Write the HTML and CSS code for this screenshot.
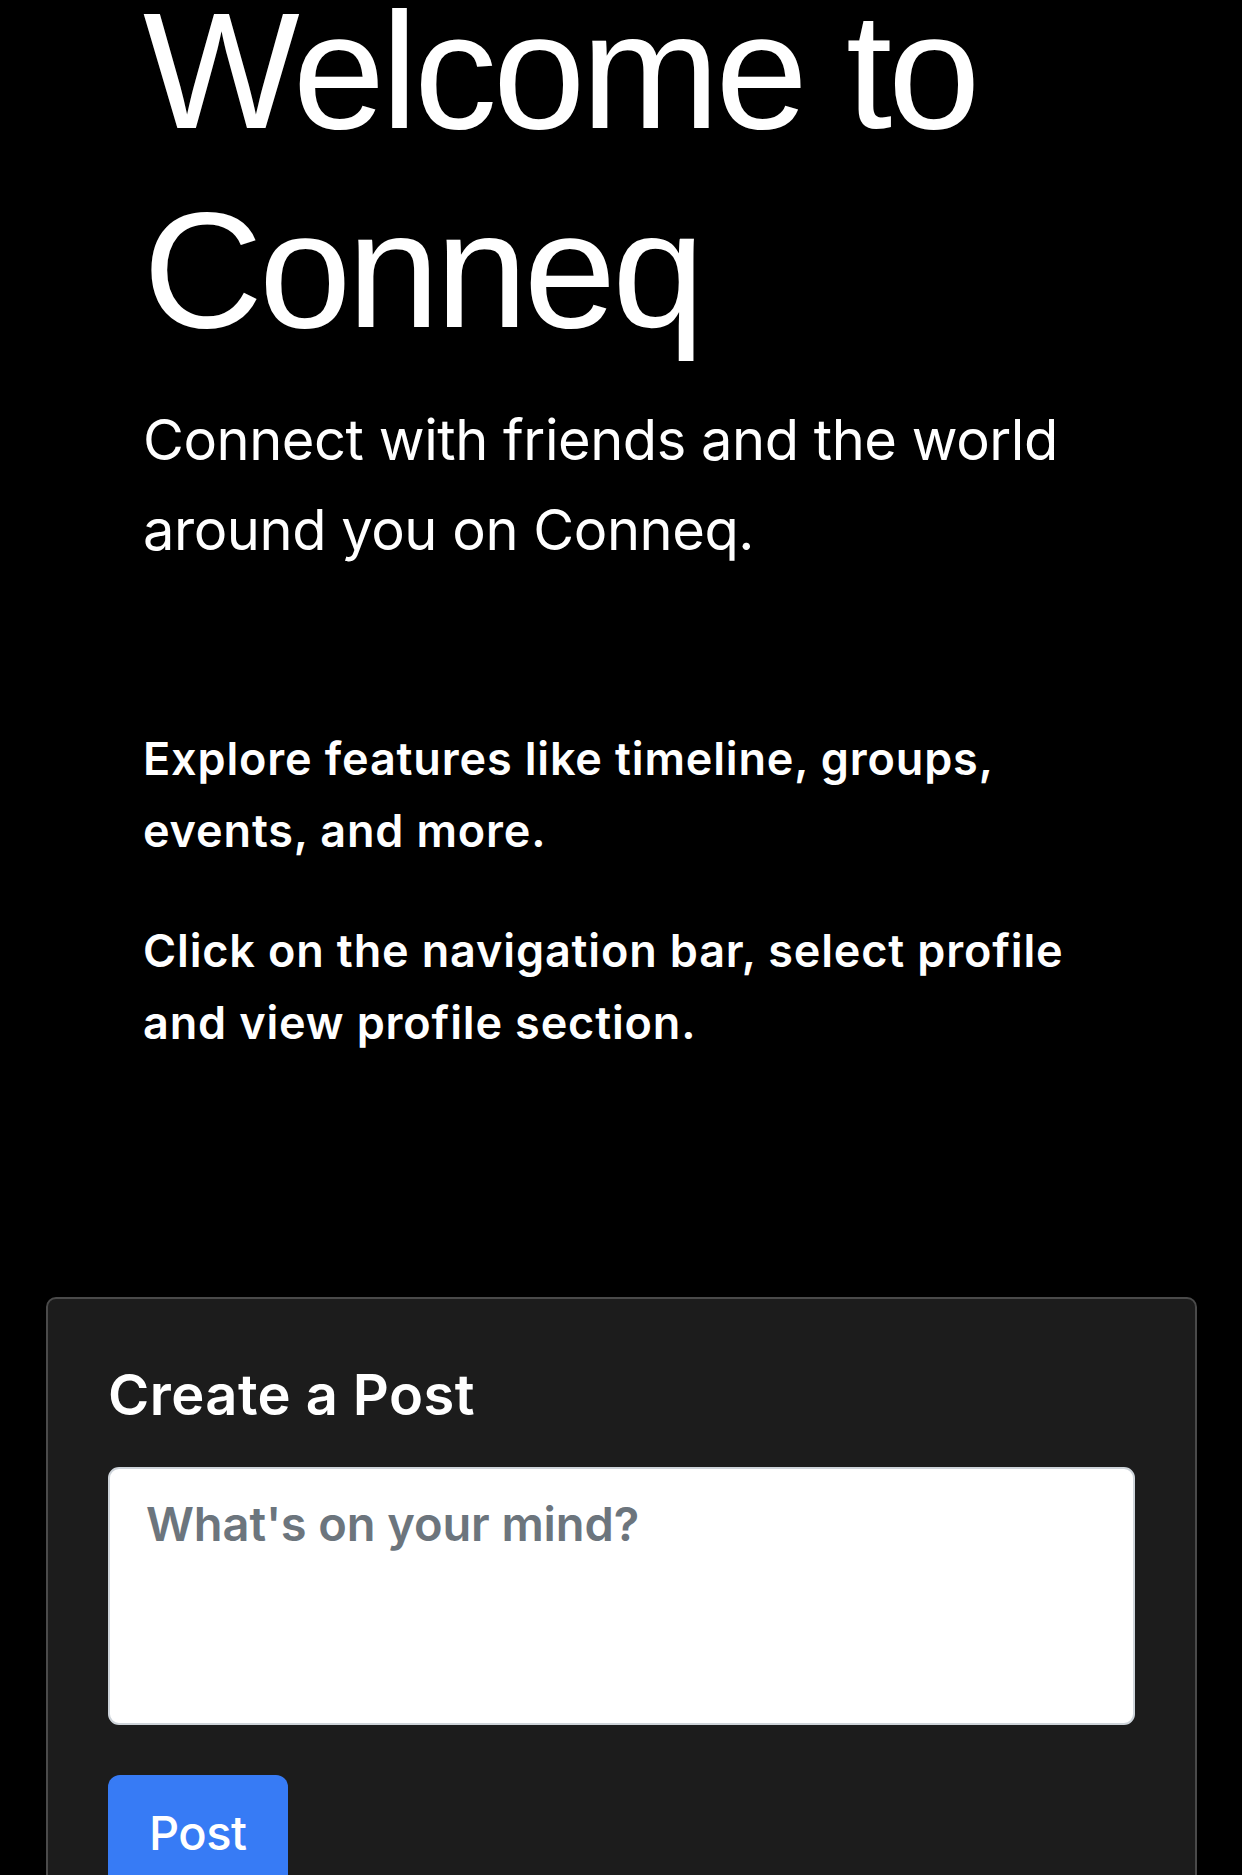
FILE: index.html
```html
<!DOCTYPE html>
<html lang="en">
<head>
<meta charset="utf-8">
<title>Conneq</title>
<link rel="stylesheet" href="styles.css">
</head>
<body>
  <main class="page">
    <section class="hero">
      <h1 class="hero-title">Welcome to Conneq</h1>
      <p class="hero-lead">Connect with friends and the world around you on Conneq.</p>
      <div class="hero-info">
        <p class="info-text">Explore features like timeline, groups, events, and more.</p>
        <p class="info-text">Click on the navigation bar, select profile and view profile section.</p>
      </div>
    </section>
    <section class="post-card">
      <h2 class="post-title">Create a Post</h2>
      <textarea class="post-input" placeholder="What's on your mind?"></textarea>
      <button class="post-button" type="button">Post</button>
    </section>
  </main>
</body>
</html>
```

FILE: styles.css
```css
html, body {
  margin: 0;
  padding: 0;
  background: #000;
  color: #fff;
  height: 1875px;
  overflow: hidden;
}

body {
  font-family: Inter, "Noto Sans", sans-serif;
}

.page {
  display: flex;
  flex-direction: column;
}

.hero {
  padding: 0 143px;
}

.hero-title {
  font-family: "Liberation Sans", Arial, sans-serif;
  font-weight: 400;
  font-size: 166px;
  line-height: 1.2;
  letter-spacing: -4px;
  margin: -29px 0 0 0;
}

.hero-lead {
  font-size: 56px;
  font-weight: 400;
  line-height: 90px;
  letter-spacing: -0.45px;
  margin: 26px 0 0 0;
}

.hero-info {
  display: flex;
  flex-direction: column;
  gap: 48px;
  margin-top: 148px;
}

.info-text {
  font-size: 45px;
  font-weight: 600;
  line-height: 72px;
  letter-spacing: 0.85px;
  margin: 0;
}

.post-card {
  margin: 238px 45px 0 46px;
  background: #1c1c1c;
  border: 2px solid #4a4a4a;
  border-radius: 10px;
  padding: 63px 60px 60px 60px;
  display: flex;
  flex-direction: column;
  align-items: flex-start;
}

.post-title {
  font-size: 56px;
  font-weight: 600;
  line-height: 67px;
  letter-spacing: 0.45px;
  margin: 0 0 38px 0;
}

.post-input {
  box-sizing: border-box;
  width: 100%;
  height: 258px;
  background: #fff;
  border: 2px solid #ced4da;
  border-radius: 11px;
  padding: 20px 36px;
  font-family: Inter, "Noto Sans", sans-serif;
  font-size: 47px;
  font-weight: 600;
  line-height: 70px;
  letter-spacing: -0.1px;
  color: #212529;
  resize: none;
  margin: 0;
}

.post-input::placeholder {
  color: #6c757d;
  opacity: 1;
}

.post-button {
  margin-top: 50px;
  background: #377bf5;
  color: #fff;
  border: none;
  border-radius: 12px;
  padding: 23px 41px;
  font-family: Inter, "Noto Sans", sans-serif;
  font-size: 47px;
  font-weight: 500;
  line-height: 70px;
  letter-spacing: -0.5px;
}
```
